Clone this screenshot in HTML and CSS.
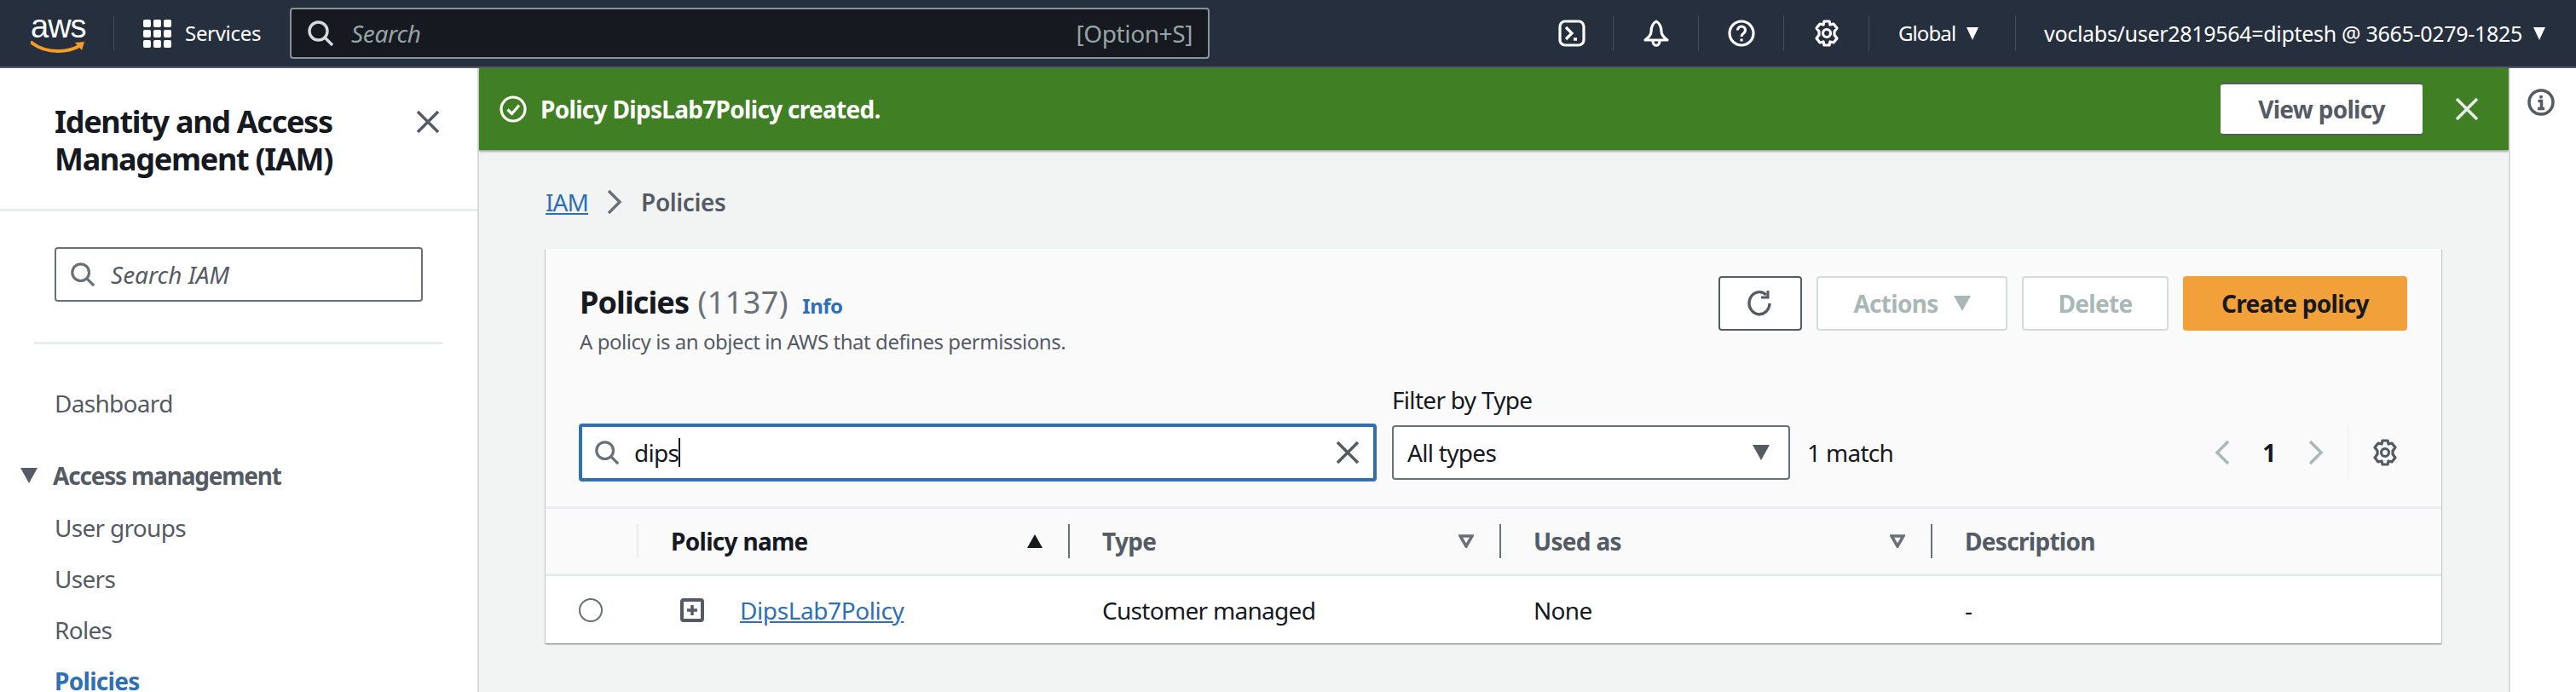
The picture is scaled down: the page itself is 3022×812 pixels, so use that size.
FILE: index.html
```html
<!DOCTYPE html>
<html lang="en">
<head>
    <meta charset="UTF-8">
    <title>Policies | IAM</title>
    <link rel="stylesheet" href="styles.css">
</head>
<body>
    <header class="topbar">
        <div class="logo">
            <span class="logo-text">aws</span>
            <svg class="logo-smile" viewBox="0 0 64 16"><path d="M1 2c9 7 20 10 31 10 9 0 18-2 25-6" fill="none" stroke="#f79c26" stroke-width="4" stroke-linecap="round"/><path d="M52 2l11-1-3 10z" fill="#f79c26"/></svg>
        </div>
        <span class="nav-sep logo-sep"></span>
        <svg class="grid-icon" viewBox="0 0 33 33" fill="#fff">
            <rect x="0" y="0" width="9" height="9" rx="2"/><rect x="12" y="0" width="9" height="9" rx="2"/><rect x="24" y="0" width="9" height="9" rx="2"/>
            <rect x="0" y="12" width="9" height="9" rx="2"/><rect x="12" y="12" width="9" height="9" rx="2"/><rect x="24" y="12" width="9" height="9" rx="2"/>
            <rect x="0" y="24" width="9" height="9" rx="2"/><rect x="12" y="24" width="9" height="9" rx="2"/><rect x="24" y="24" width="9" height="9" rx="2"/>
        </svg>
        <span class="services">Services</span>
        <div class="top-search">
            <svg class="icon-md" viewBox="0 0 32 32" fill="none" stroke="#d5dbdb" stroke-width="3.4"><circle cx="13.5" cy="13.5" r="10.5"/><path d="M21 21l9 9"/></svg>
            <span class="top-search-text">Search</span>
            <span class="shortcut">[Option+S]</span>
        </div>
        <div class="top-icon first">
            <svg class="icon-md" viewBox="0 0 32 32" fill="none" stroke="#fff" stroke-width="3.200"><rect x="2" y="2" width="28" height="28" rx="6"/><path d="M9 9l7 7-7 7"/><path d="M18 23h4" stroke-width="3.500"/></svg>
        </div>
        <span class="nav-sep"></span>
        <div class="top-icon">
            <svg class="icon-md" viewBox="0 0 32 32" fill="none" stroke="#fff" stroke-width="3.200" stroke-linejoin="round"><path d="M16 2c-5 3-6 8-6 12 0 4-3 7-7 10h26c-4-3-7-6-7-10 0-4-1-9-6-12z"/><path d="M12 25c0 7 8 7 8 0"/></svg>
        </div>
        <span class="nav-sep"></span>
        <div class="top-icon">
            <svg class="icon-md" viewBox="0 0 32 32" fill="none" stroke="#fff" stroke-width="3.200"><circle cx="16" cy="16" r="14"/><path d="M11.500 12.500c0-6 9-6 9 0 0 4-4.500 3.500-4.500 7.500"/><path d="M16 22.500v3"/></svg>
        </div>
        <span class="nav-sep"></span>
        <div class="top-icon">
            <svg class="icon-md" viewBox="0 0 32 32" fill="none" stroke="#fff" stroke-width="3.200" stroke-linejoin="round"><path d="M13 2h6l1 4 4-1 4 5-3 4v4l3 4-4 5-4-1-1 4h-6l-1-4-4 1-4-5 3-4v-4L4 10l4-5 4 1z"/><circle cx="16" cy="16" r="4.500"/></svg>
        </div>
        <span class="nav-sep"></span>
        <span class="top-menu region">Global <i class="tri tri-white"></i></span>
        <span class="nav-sep"></span>
        <span class="top-menu account">voclabs/user2819564=diptesh @ 3665-0279-1825 <i class="tri tri-white"></i></span>
    </header>

    <div class="layout">
        <aside class="sidebar">
            <div class="side-head">
                <h2>Identity and Access Management (IAM)</h2>
                <svg class="icon-close" viewBox="0 0 28 28" fill="none" stroke="#545b64" stroke-width="3.500"><path d="M2 2l24 24M26 2L2 26"/></svg>
            </div>
            <div class="side-search">
                <svg class="icon-sm" viewBox="0 0 32 32" fill="none" stroke="#687078" stroke-width="3.400"><circle cx="13.500" cy="13.500" r="10.500"/><path d="M21 21l9 9"/></svg>
                <span>Search IAM</span>
            </div>
            <div class="side-rule"></div>
            <a class="side-link dash">Dashboard</a>
            <div class="side-group"><i class="tri tri-grey"></i>Access management</div>
            <a class="side-link">User groups</a>
            <a class="side-link">Users</a>
            <a class="side-link">Roles</a>
            <a class="side-link active">Policies</a>
        </aside>

        <main class="main">
            <div class="flash">
                <svg class="flash-check" viewBox="0 0 32 32" fill="none" stroke="#fff" stroke-width="3.200"><circle cx="16" cy="16" r="14"/><path d="M9.500 16.500l5 5 8.500-10"/></svg>
                <span class="flash-text">Policy DipsLab7Policy created.</span>
                <button class="btn-white">View policy</button>
                <svg class="icon-close flash-close" viewBox="0 0 28 28" fill="none" stroke="#e9ebed" stroke-width="3.500"><path d="M2 2l24 24M26 2L2 26"/></svg>
            </div>

            <nav class="crumbs">
                <a>IAM</a>
                <svg viewBox="0 0 18 30" class="crumb-sep" fill="none" stroke="#687078" stroke-width="3.500"><path d="M2 2l13 13L2 28"/></svg>
                <span>Policies</span>
            </nav>

            <section class="card">
                <div class="card-head">
                    <div class="card-title">
                        <h1>Policies <span class="count">(1137)</span> <a class="info">Info</a></h1>
                        <p>A policy is an object in AWS that defines permissions.</p>
                    </div>
                    <div class="actions">
                        <button class="btn btn-refresh">
                            <svg class="icon-md" viewBox="0 0 32 32" fill="none" stroke="#545b64" stroke-width="3.400"><path d="M27 16a12 13 0 1 1-4-10"/><path d="M25 1v8h-8" stroke-width="3"/></svg>
                        </button>
                        <button class="btn btn-off btn-actions">Actions <i class="tri tri-off"></i></button>
                        <button class="btn btn-off btn-delete">Delete</button>
                        <button class="btn btn-primary">Create policy</button>
                    </div>
                </div>

                <div class="filters">
                    <div class="filter-input">
                        <svg class="icon-sm" viewBox="0 0 32 32" fill="none" stroke="#687078" stroke-width="3.400"><circle cx="13.500" cy="13.500" r="10.500"/><path d="M21 21l9 9"/></svg>
                        <span class="typed">dips</span>
                        <svg class="icon-clear" viewBox="0 0 28 28" fill="none" stroke="#545b64" stroke-width="3.500"><path d="M2 2l24 24M26 2L2 26"/></svg>
                    </div>
                    <div class="filter-type">
                        <label>Filter by Type</label>
                        <div class="select">All types <i class="tri tri-grey"></i></div>
                    </div>
                    <span class="matches">1 match</span>
                    <div class="pager">
                        <svg class="chev" viewBox="0 0 18 30" fill="none" stroke="#aab7b8" stroke-width="3.500"><path d="M16 2L3 15l13 13"/></svg>
                        <span class="page-no">1</span>
                        <svg class="chev" viewBox="0 0 18 30" fill="none" stroke="#aab7b8" stroke-width="3.500"><path d="M2 2l13 13L2 28"/></svg>
                        <span class="pager-sep"></span>
                        <svg class="icon-md" viewBox="0 0 32 32" fill="none" stroke="#545b64" stroke-width="3.200" stroke-linejoin="round"><path d="M13 2h6l1 4 4-1 4 5-3 4v4l3 4-4 5-4-1-1 4h-6l-1-4-4 1-4-5 3-4v-4L4 10l4-5 4 1z"/><circle cx="16" cy="16" r="4.500"/></svg>
                    </div>
                </div>

                <div class="table-row thead">
                    <div class="cell"></div>
                    <div class="cell th th-first">Policy name <i class="tri-up"></i></div>
                    <div class="cell th">Type <svg class="sort-tri" viewBox="0 0 18 16" fill="none" stroke="#687078" stroke-width="3.500"><path d="M2 2h14l-7 12z"/></svg></div>
                    <div class="cell th">Used as <svg class="sort-tri" viewBox="0 0 18 16" fill="none" stroke="#687078" stroke-width="3.500"><path d="M2 2h14l-7 12z"/></svg></div>
                    <div class="cell th">Description</div>
                </div>
                <div class="table-row tbody">
                    <div class="cell"><span class="radio"></span></div>
                    <div class="cell">
                        <svg class="expand" viewBox="0 0 28 28"><rect x="2" y="2" width="24" height="24" rx="2" fill="#fff" stroke="#545b64" stroke-width="4"/><path d="M14 8v12M8 14h12" stroke="#545b64" stroke-width="3.500"/></svg>
                        <a class="policy-link">DipsLab7Policy</a>
                    </div>
                    <div class="cell">Customer managed</div>
                    <div class="cell">None</div>
                    <div class="cell">-</div>
                </div>
            </section>
        </main>

        <aside class="rail">
            <svg class="rail-info" viewBox="0 0 32 32" fill="none" stroke="#545b64" stroke-width="3.500"><circle cx="16" cy="16" r="14"/><path d="M16 8v3.500M12.500 14.500H16.500V23M12 23.500h8"/></svg>
        </aside>
    </div>
</body>
</html>
```

FILE: styles.css
```css
* { box-sizing: border-box; }

body {
    margin: 0;
    height: 812px;
    overflow: hidden;
    font-family: "Noto Sans", "Open Sans", sans-serif;
    font-size: 28px;
    line-height: 40px;
    letter-spacing: -0.7px;
    color: #16191f;
    background: #fff;
}

svg { display: block; flex: none; }
a { color: inherit; }

.tri {
    display: inline-block;
    width: 0;
    height: 0;
    border-left: 10px solid transparent;
    border-right: 10px solid transparent;
    border-top: 18px solid #545b64;
}
.tri-white { border-left-width: 7px; border-right-width: 7px; border-top: 15px solid #fff; margin-left: 13px; }
.tri-off { border-top-color: #aab7b8; margin-left: 18px; }

/* top nav */
.topbar {
    display: flex;
    align-items: center;
    height: 80px;
    padding-left: 36px;
    background: #252f3e;
    border-bottom: 2px solid #545b64;
    color: #fff;
    font-size: 24px;
    letter-spacing: -0.3px;
}
.logo { width: 64px; height: 50px; }
.logo-text {
    display: block;
    font-family: "Liberation Sans", sans-serif;
    font-size: 38px;
    line-height: 34px;
    text-align: center;
    letter-spacing: -1px;
}
.logo-smile { width: 64px; height: 16px; }
.nav-sep { width: 1px; height: 42px; background: #414d5c; flex: none; }
.logo-sep { margin-left: 33px; margin-right: 34px; }
.grid-icon { width: 33px; height: 33px; }
.services { margin-left: 16px; width: 123px; }
.top-search {
    display: flex;
    align-items: center;
    width: 1079px;
    height: 60px;
    padding: 0 18px;
    background: #16191f;
    border: 2px solid #879596;
    border-radius: 4px;
    color: #95a5a6;
    font-size: 28px;
}
.top-search-text { font-style: italic; margin-left: 20px; }
.shortcut { margin-left: auto; letter-spacing: -0.4px; }
.icon-md { width: 32px; height: 32px; }
.icon-sm { width: 30px; height: 30px; }
.top-icon { width: 99px; display: flex; justify-content: center; }
.top-icon.first { width: 48px; margin-left: 401px; margin-right: 24px; }
.top-menu { display: flex; align-items: center; white-space: nowrap; }
.region { width: 171px; padding-left: 34px; letter-spacing: -0.9px; }
.account { padding-left: 33px; font-size: 25px; }

/* page */
.layout { display: flex; height: 732px; }

.sidebar {
    width: 562px;
    flex: none;
    background: #fff;
    border-right: 2px solid #d5dbdb;
}
.side-head {
    display: flex;
    justify-content: space-between;
    height: 168px;
    padding: 41px 44px 0 64px;
    border-bottom: 3px solid #eaeded;
}
.side-head h2 {
    width: 400px;
    margin: 0;
    font-size: 36px;
    line-height: 44px;
    font-weight: 700;
    letter-spacing: -1.3px;
}
.icon-close { width: 28px; height: 28px; margin-top: 8px; }
.side-search {
    display: flex;
    align-items: center;
    gap: 18px;
    width: 432px;
    height: 64px;
    margin: 42px 0 0 64px;
    padding: 0 16px;
    border: 2px solid #687078;
    border-radius: 4px;
    color: #545b64;
    font-style: italic;
    letter-spacing: 0;
}
.side-rule { height: 3px; margin: 47px 40px 0; background: #eaeded; }
.side-link { display: block; margin: 20px 0 0 64px; color: #545b64; }
.side-link.dash { margin-top: 49px; }
.side-group {
    display: flex;
    align-items: center;
    gap: 18px;
    margin: 45px 0 21px 24px;
    font-weight: 700;
    color: #545b64;
    letter-spacing: -1.2px;
}
.side-link.active { color: #2f6fb5; font-weight: 700; }

.main { flex: 1; background: #f2f3f3; min-width: 0; }
.flash {
    display: flex;
    align-items: center;
    height: 96px;
    padding: 0 35px 0 24px;
    background: #407f23;
    color: #fff;
    font-weight: 700;
    box-shadow: 0 2px 2px rgba(84, 91, 100, .5);
}
.flash-check { width: 32px; height: 32px; }
.flash-text { margin-left: 16px; }
.btn-white {
    width: 237px;
    height: 62px;
    margin-left: auto;
    background: #fff;
    border: 0;
    border-top: 2px solid #545b64;
    border-bottom: 2px solid #545b64;
    border-radius: 4px;
    color: #545b64;
    font: 700 28px "Noto Sans", sans-serif;
    letter-spacing: -0.7px;
}
.flash-close { margin: 0 0 0 38px; }

.crumbs {
    display: flex;
    align-items: center;
    height: 40px;
    margin: 41px 0 0 78px;
    font-weight: 600;
    color: #545b64;
    letter-spacing: -0.4px;
}
.crumbs a { color: #2f6fb5; font-weight: 400; text-decoration: underline; letter-spacing: -0.9px; }
.crumb-sep { width: 18px; height: 30px; margin: 0 22px 0 22px; }

.card {
    margin: 35px 79px 0 78px;
    background: #fafafa;
    box-shadow: 0 1px 1px rgba(0, 28, 36, .3), 1px 1px 1px rgba(0, 28, 36, .15), -1px 1px 1px rgba(0, 28, 36, .15);
}
.card-head {
    display: flex;
    justify-content: space-between;
    padding: 32px 40px 0;
}
.card-title h1 {
    margin: 9px 0 0;
    font-size: 36px;
    line-height: 44px;
    font-weight: 700;
    letter-spacing: -0.9px;
}
.count { margin-left: 2px; font-weight: 400; color: #687078; letter-spacing: 0.4px; }
.info { margin-left: 8px; font-size: 24px; font-weight: 700; color: #2f6fb5; letter-spacing: -0.5px; }
.card-title p { margin: 3px 0 0; font-size: 24px; line-height: 34px; color: #545b64; letter-spacing: -0.45px; }
.actions { display: flex; gap: 17px; }
.btn {
    display: flex;
    align-items: center;
    justify-content: center;
    height: 64px;
    padding: 0;
    background: #fff;
    border: 2px solid #545b64;
    border-radius: 4px;
    font: 700 28px "Noto Sans", sans-serif;
    letter-spacing: -0.7px;
}
.btn-refresh { width: 98px; }
.btn-off { border-color: #d5dbdb; color: #aab7b8; }
.btn-actions { width: 224px; }
.btn-delete { width: 172px; }
.btn-primary { width: 263px; background: #f2a03a; border-color: #f2a03a; color: #16191f; }

.filters {
    display: flex;
    align-items: flex-end;
    height: 145px;
    padding: 0 50px 0 39px;
}
.filter-input {
    display: flex;
    align-items: center;
    gap: 17px;
    flex: none;
    width: 936px;
    height: 68px;
    padding: 0 16px 0 14px;
    margin-bottom: -2px;
    background: #fff;
    border: 4px solid #2f6fb5;
    border-radius: 4px;
}
.typed { border-right: 2px solid #16191f; line-height: 34px; }
.icon-clear { width: 28px; height: 28px; margin-left: auto; }
.filter-type { flex: none; margin-left: 18px; width: 467px; }
.filter-type label { display: block; height: 48px; line-height: 36px; }
.select {
    display: flex;
    align-items: center;
    justify-content: space-between;
    height: 64px;
    padding: 0 22px 0 16px;
    background: #fff;
    border: 2px solid #687078;
    border-radius: 4px;
}
.matches { margin-left: 20px; line-height: 64px; white-space: nowrap; }
.pager { display: flex; align-items: center; height: 64px; margin-left: auto; }
.chev { width: 18px; height: 30px; }
.page-no { width: 94px; text-align: center; font-weight: 700; margin: 0 -1px; }
.pager-sep { width: 1px; height: 64px; margin: 0 27px 0 28px; background: #eaeded; }

.table-row { display: grid; grid-template-columns: 107px 506px 506px 506px 1fr; }
.thead {
    height: 82px;
    margin-top: 31px;
    padding: 18px 0;
    border-top: 3px solid #eaeded;
    border-bottom: 3px solid #eaeded;
    align-items: center;
}
.tbody { height: 79px; background: #fff; align-items: center; }
.cell { display: flex; align-items: center; padding-left: 40px; }
.th {
    justify-content: space-between;
    padding-right: 30px;
    padding-left: 38px;
    font-weight: 700;
    color: #545b64;
    border-left: 2px solid #687078;
}
.th-first { border-left-color: #eaeded; color: #16191f; }
.tri-up {
    width: 0;
    height: 0;
    border-left: 9px solid transparent;
    border-right: 9px solid transparent;
    border-bottom: 16px solid #16191f;
}
.sort-tri { width: 18px; height: 16px; }
.radio {
    display: block;
    width: 28px;
    height: 28px;
    margin-left: -1px;
    border: 2px solid #687078;
    border-radius: 50%;
    background: #fff;
}
.expand { width: 28px; height: 28px; margin-right: 42px; margin-left: 11px; }
.policy-link { color: #2f6fb5; text-decoration: underline; letter-spacing: -0.4px; }

.rail {
    width: 79px;
    flex: none;
    background: #fff;
    border-left: 2px solid #d5dbdb;
}
.rail-info { width: 32px; height: 32px; margin: 24px 0 0 20px; }
```
